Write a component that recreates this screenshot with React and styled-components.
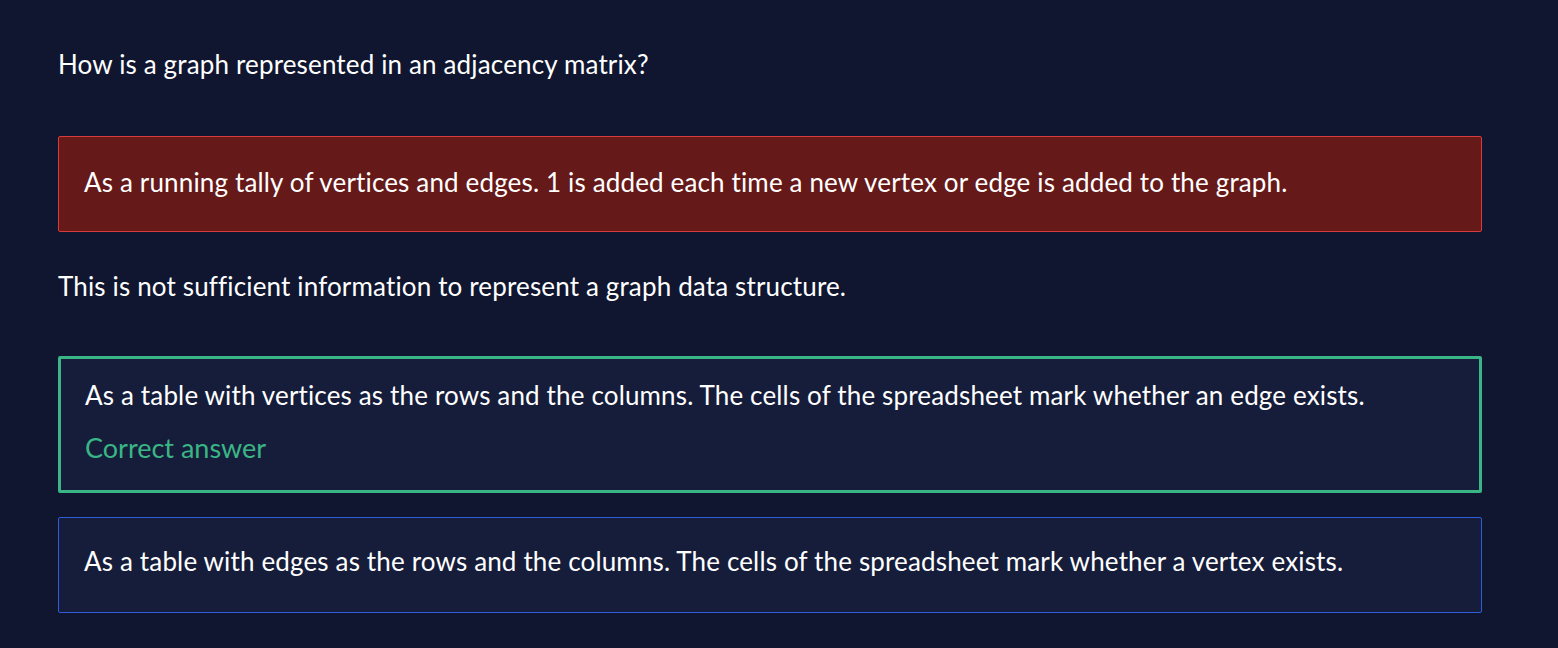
import React from "react";
import styled, { createGlobalStyle } from "styled-components";

const Global = createGlobalStyle`
  html, body { margin: 0; padding: 0; background: #10162f; }
  body { font-family: "Lato", "Noto Sans", sans-serif; color: #ffffff; }
  * { box-sizing: border-box; }
`;

const Page = styled.div`
  width: 1558px;
  height: 648px;
  background: #10162f;
  padding: 49px 77px 0 58px;
  display: flex;
  flex-direction: column;
`;

const Question = styled.p`
  margin: 0;
  font-size: 26px;
  letter-spacing: 0.15px;
  line-height: 30px;
  color: #ffffff;
`;

const Feedback = styled.p`
  margin: 39px 0 0 0;
  font-size: 26px;
  letter-spacing: 0.15px;
  line-height: 30px;
  color: #ffffff;
`;

const variants = {
  wrong: { bg: "#661919", border: "#d93a3a", width: 1, pad: "30px 25px 34px" },
  correct: { bg: "#161d3a", border: "#3ab586", width: 3, pad: "21px 24px 27px 24px" },
  neutral: { bg: "#161d3a", border: "#2f5dd6", width: 1, pad: "28px 25px 36px" },
};

const Option = styled.div`
  width: 1424px;
  background: ${(p) => variants[p.$kind].bg};
  border: ${(p) => variants[p.$kind].width}px solid ${(p) => variants[p.$kind].border};
  border-radius: 2px;
  padding: ${(p) => variants[p.$kind].pad};
  display: flex;
  flex-direction: column;
  gap: 23px;
  margin-top: ${(p) => p.$top}px;
`;

const OptionText = styled.span`
  font-size: 26px;
  letter-spacing: 0.15px;
  line-height: 30px;
  color: #ffffff;
`;

const CorrectLabel = styled.span`
  font-size: 27px;
  line-height: 30px;
  color: #3ab586;
`;

export default function App() {
  return (
    <>
      <Global />
      <Page>
        <Question>How is a graph represented in an adjacency matrix?</Question>
        <Option $kind="wrong" $top={57}>
          <OptionText>
            As a running tally of vertices and edges. 1 is added each time a new vertex or edge is added to the graph.
          </OptionText>
        </Option>
        <Feedback>
          This is not sufficient information to represent a graph data structure.
        </Feedback>
        <Option $kind="correct" $top={55}>
          <OptionText>
            As a table with vertices as the rows and the columns. The cells of the spreadsheet mark whether an edge exists.
          </OptionText>
          <CorrectLabel>Correct answer</CorrectLabel>
        </Option>
        <Option $kind="neutral" $top={24}>
          <OptionText>
            As a table with edges as the rows and the columns. The cells of the spreadsheet mark whether a vertex exists.
          </OptionText>
        </Option>
      </Page>
    </>
  );
}
